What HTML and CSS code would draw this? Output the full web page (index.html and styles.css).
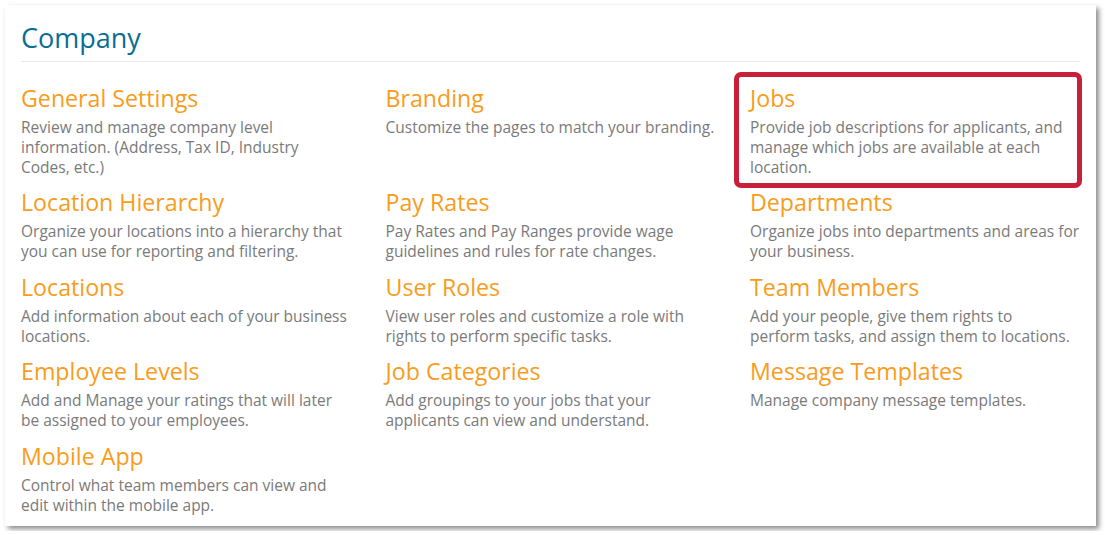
FILE: index.html
```html
<!DOCTYPE html>
<html lang="en">
<head>
  <meta charset="UTF-8" />
  <title>Company</title>
  <link rel="stylesheet" href="styles.css">
</head>
<body>
  <div class="panel">
    <h1 class="panel-title">Company</h1>

    <div class="settings-grid">
      <div class="setting">
        <a class="setting-name" href="#">General Settings</a>
        <p>Review and manage company level information. (Address, Tax ID, Industry<br>Codes, etc.)</p>
      </div>
      <div class="setting">
        <a class="setting-name" href="#">Branding</a>
        <p>Customize the pages to match your branding.</p>
      </div>
      <div class="setting highlighted">
        <a class="setting-name" href="#">Jobs</a>
        <p>Provide job descriptions for applicants, and manage which jobs are available at each location.</p>
      </div>

      <div class="setting">
        <a class="setting-name" href="#">Location Hierarchy</a>
        <p>Organize your locations into a hierarchy that you can use for reporting and filtering.</p>
      </div>
      <div class="setting">
        <a class="setting-name" href="#">Pay Rates</a>
        <p>Pay Rates and Pay Ranges provide wage guidelines and rules for rate changes.</p>
      </div>
      <div class="setting">
        <a class="setting-name" href="#">Departments</a>
        <p>Organize jobs into departments and areas for your business.</p>
      </div>

      <div class="setting">
        <a class="setting-name" href="#">Locations</a>
        <p>Add information about each of your business locations.</p>
      </div>
      <div class="setting">
        <a class="setting-name" href="#">User Roles</a>
        <p>View user roles and customize a role with rights to perform specific tasks.</p>
      </div>
      <div class="setting">
        <a class="setting-name" href="#">Team Members</a>
        <p>Add your people, give them rights to<br>perform tasks, and assign them to locations.</p>
      </div>

      <div class="setting">
        <a class="setting-name" href="#">Employee Levels</a>
        <p>Add and Manage your ratings that will later be assigned to your employees.</p>
      </div>
      <div class="setting">
        <a class="setting-name" href="#">Job Categories</a>
        <p>Add groupings to your jobs that your applicants can view and understand.</p>
      </div>
      <div class="setting">
        <a class="setting-name" href="#">Message Templates</a>
        <p>Manage company message templates.</p>
      </div>

      <div class="setting">
        <a class="setting-name" href="#">Mobile App</a>
        <p>Control what team members can view and edit within the mobile app.</p>
      </div>
    </div>
  </div>
</body>
</html>
```

FILE: styles.css
```css
* {
  box-sizing: border-box;
  margin: 0;
  padding: 0;
}
body {
  background-color: #fff;
  font-family: 'Open Sans', 'Noto Sans', sans-serif;
}
.panel {
  width: 1091px;
  height: 521px;
  margin: 5px;
  padding: 14.5px 16px 0 16px;
  background-color: #fff;
  box-shadow: 3px 3px 5px rgba(0, 0, 0, 0.45);
}
.panel-title {
  font-size: 27px;
  font-weight: 400;
  line-height: 36px;
  color: #0b6d94;
  padding-bottom: 5px;
  border-bottom: 1px solid #e8e8e8;
}
.settings-grid {
  display: grid;
  grid-template-columns: repeat(3, 333px);
  column-gap: 31.5px;
  row-gap: 10.5px;
  padding-top: 21px;
}
.setting {
  position: relative;
}
.setting-name {
  display: block;
  margin-bottom: 4px;
  font-size: 23.2px;
  line-height: 30px;
  color: #f89c1c;
  text-decoration: none;
}
.setting p {
  font-size: 15.5px;
  line-height: 20px;
  color: #7a7a7a;
}
.highlighted::before {
  content: "";
  position: absolute;
  left: -16px;
  top: -11px;
  box-sizing: border-box;
  width: 348px;
  height: 116px;
  border: 5px solid #c8203a;
  border-radius: 7px;
}
```
